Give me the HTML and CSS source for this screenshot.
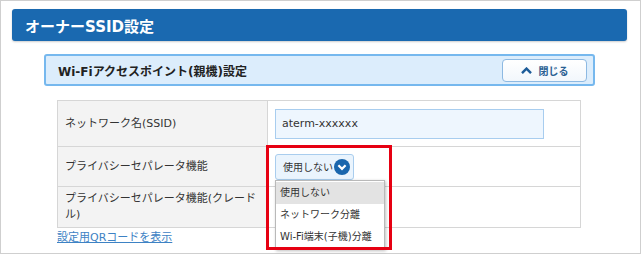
FILE: index.html
```html
<!DOCTYPE html>
<html lang="ja">
<head>
    <meta charset="UTF-8">
    <title>オーナーSSID設定</title>
    <link rel="stylesheet" href="styles.css">
</head>
<body>
    <div class="frame">
        <div class="page-title">オーナーSSID設定</div>

        <div class="section">
            <div class="section-head">
                <span>Wi-Fiアクセスポイント(親機)設定</span>
                <button class="close-btn">
                    <svg width="11" height="7" viewBox="0 0 11 7"><polyline points="1,6.2 5.5,1.6 10,6.2" fill="none" stroke="#1d5c99" stroke-width="2.4"/></svg>
                    閉じる
                </button>
            </div>

            <table class="settings">
                <tr class="row-ssid">
                    <th>ネットワーク名(SSID)</th>
                    <td><input type="text" class="text-input" value="aterm-xxxxxx"></td>
                </tr>
                <tr class="row-sep">
                    <th>プライバシーセパレータ機能</th>
                    <td>
                        <div class="select-wrap">
                            <div class="select">
                                <span>使用しない</span>
                                <svg width="16" height="16" viewBox="0 0 16 16"><circle cx="8" cy="8" r="8" fill="#1a66ad"/><polyline points="4.4,6.3 8,9.9 11.6,6.3" fill="none" stroke="#fff" stroke-width="2.2"/></svg>
                            </div>
                            <!-- open option list -->
                            <ul class="options">
                                <li class="selected">使用しない</li>
                                <li>ネットワーク分離</li>
                                <li>Wi-Fi端末(子機)分離</li>
                            </ul>
                        </div>
                    </td>
                </tr>
                <tr class="row-cradle">
                    <th>プライバシーセパレータ機能(クレードル)</th>
                    <td></td>
                </tr>
            </table>

            <a href="javascript:void(0)" class="qr-link">設定用QRコードを表示</a>
        </div>

        <div class="highlight"></div>
    </div>
</body>
</html>
```

FILE: styles.css
```css
* {
    margin: 0;
    padding: 0;
    box-sizing: border-box;
}

body {
    font-family: "DejaVu Sans", "Noto Sans CJK JP", sans-serif;
    background-color: #FFF;
    color: #333;
}

.frame {
    position: relative;
    width: 641px;
    height: 254px;
    border: 1px solid #CFCFCF;
    padding: 8px 13px 0 11px;
}

.page-title {
    height: 32px;
    display: flex;
    align-items: center;
    padding-left: 13px;
    background-color: #1A69B0;
    border-radius: 3px;
    box-shadow: 0 1px 2px rgba(0, 0, 0, 0.2);
    color: #FFF;
    font-size: 15px;
    font-weight: bold;
}

.section {
    margin: 13px 32px 0 32px;
}

.section-head {
    height: 32px;
    display: flex;
    align-items: center;
    justify-content: space-between;
    padding: 0 6px 0 12px;
    background-color: #DCEDFC;
    border: 2px solid #76B8EE;
    border-radius: 3px;
    font-size: 12px;
    font-weight: bold;
    color: #222;
}

.close-btn {
    width: 85px;
    height: 23px;
    display: flex;
    align-items: center;
    justify-content: center;
    gap: 7px;
    background: linear-gradient(#FFF, #F2F7FC);
    border: 1px solid #8DB9E2;
    border-radius: 4px;
    font-family: inherit;
    font-size: 10px;
    font-weight: bold;
    color: #2B5F93;
}

/* Settings table */
.settings {
    width: 524px;
    margin: 14px 0 0 13px;
    border-collapse: collapse;
    font-size: 11px;
}

.settings th,
.settings td {
    border: 1px solid #D6D6D6;
}

.settings th {
    width: 210px;
    padding: 0 4px 0 7px;
    background-color: #F3F3F3;
    text-align: left;
    font-weight: normal;
    line-height: 16px;
}

.settings td {
    padding: 0 7px;
}

.row-ssid {
    height: 46px;
}

.row-sep {
    height: 40px;
}

.row-cradle {
    height: 41px;
}

.text-input {
    width: 269px;
    height: 30px;
    padding-left: 6px;
    background-color: #EEF6FE;
    border: 1px solid #A8CDEF;
    font-family: inherit;
    font-size: 11px;
    color: #333;
}

.select-wrap {
    position: relative;
    display: inline-block;
    vertical-align: middle;
}

.select {
    width: 79px;
    height: 26px;
    display: flex;
    align-items: center;
    justify-content: space-between;
    padding: 0 3px 0 7px;
    background-color: #EAF4FD;
    border: 1px solid #A9CDEE;
    border-radius: 3px;
    font-size: 10px;
}

.options {
    position: absolute;
    top: 100%;
    left: 0;
    width: 110px;
    padding: 1px 0;
    list-style: none;
    background-color: #FFF;
    border: 1px solid #B9B9B9;
    box-shadow: 1px 1px 3px rgba(0, 0, 0, 0.25);
    font-size: 10px;
    z-index: 10;
}

.options li {
    height: 22px;
    line-height: 22px;
    padding-left: 4px;
}

.options .selected {
    background-color: #E3E3E3;
}

.qr-link {
    display: block;
    margin-top: 2px;
    margin-left: 13px;
    line-height: 16px;
    font-size: 11px;
    color: #3D82C4;
}

/* Red annotation box */
.highlight {
    position: absolute;
    left: 265px;
    top: 144px;
    width: 126px;
    height: 105px;
    border: 3px solid #E60012;
    z-index: 20;
}
```
